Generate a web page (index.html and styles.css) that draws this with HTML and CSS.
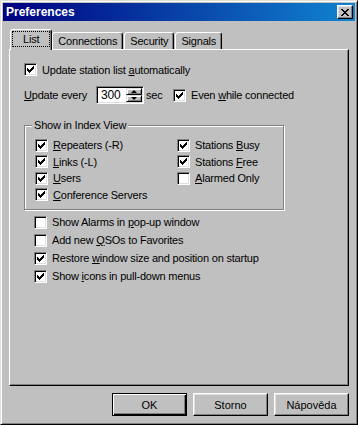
FILE: index.html
```html
<!DOCTYPE html>
<html>
<head>
    <link rel="stylesheet" href="styles.css">
</head>
<body>
  <svg width="0" height="0" class="defs">
    <symbol id="chk" viewBox="0 0 11 11">
      <path d="M8 2h1v1h-1z M7 3h2v1h-2z M2 4h1v1h-1z M6 4h3v1h-3z M2 5h2v1h-2z M5 5h3v1h-3z M2 6h5v1h-5z M3 7h3v1h-3z M4 8h1v1h-1z" fill="#000"/>
    </symbol>
  </svg>
  <div class="window">
    <div class="titlebar">
      <span class="title">Preferences</span>
      <span class="close">
        <svg width="8" height="7" viewBox="0 0 8 7"><path d="M0 0h2v1H0z M6 0h2v1H6z M1 1h2v1H1z M5 1h2v1H5z M2 2h4v1H2z M3 3h2v1H3z M2 4h4v1H2z M1 5h2v1H1z M5 5h2v1H5z M0 6h2v1H0z M6 6h2v1H6z" fill="#000"/></svg>
      </span>
    </div>
    <div class="body">
      <div class="tabs">
        <div class="tab active"><span class="focus">List</span></div>
        <div class="tab">Connections</div>
        <div class="tab">Security</div>
        <div class="tab">Signals</div>
      </div>
      <div class="panel">
        <div class="row">
          <label class="check"><span class="cb"><svg><use href="#chk"/></svg></span><span>Update station list <u>a</u>utomatically</span></label>
        </div>
        <div class="row row-every">
          <span class="lbl-every"><u>U</u>pdate every</span>
          <div class="spin">
            <span class="spin-val">300</span>
            <span class="spin-btns">
              <span class="spin-btn"><i class="arrow up"></i></span>
              <span class="spin-btn"><i class="arrow down"></i></span>
            </span>
          </div>
          <span class="sec">sec</span>
          <label class="check"><span class="cb"><svg><use href="#chk"/></svg></span><span>Even <u>w</u>hile connected</span></label>
        </div>
        <div class="group">
          <span class="legend">Show in Index View</span>
          <div class="gcol">
            <label class="check grow"><span class="cb"><svg><use href="#chk"/></svg></span><span><u>R</u>epeaters (-R)</span></label>
            <label class="check grow"><span class="cb"><svg><use href="#chk"/></svg></span><span><u>L</u>inks (-L)</span></label>
            <label class="check grow"><span class="cb"><svg><use href="#chk"/></svg></span><span><u>U</u>sers</span></label>
            <label class="check grow"><span class="cb"><svg><use href="#chk"/></svg></span><span><u>C</u>onference Servers</span></label>
          </div>
          <div class="gcol">
            <label class="check grow"><span class="cb"><svg><use href="#chk"/></svg></span><span>Stations <u>B</u>usy</span></label>
            <label class="check grow"><span class="cb"><svg><use href="#chk"/></svg></span><span>Stations <u>F</u>ree</span></label>
            <label class="check grow"><span class="cb"></span><span><u>A</u>larmed Only</span></label>
          </div>
        </div>
        <div class="opts">
          <label class="check orow"><span class="cb"></span><span>Show Alarms in <u>p</u>op-up window</span></label>
          <label class="check orow"><span class="cb"></span><span>Add new <u>Q</u>SOs to Favorites</span></label>
          <label class="check orow"><span class="cb"><svg><use href="#chk"/></svg></span><span>Restore <u>w</u>indow size and position on startup</span></label>
          <label class="check orow"><span class="cb"><svg><use href="#chk"/></svg></span><span>Show <u>i</u>cons in pull-down menus</span></label>
        </div>
      </div>
      <div class="buttons">
        <button class="btn default">OK</button>
        <button class="btn">Storno</button>
        <button class="btn">Nápověda</button>
      </div>
    </div>
  </div>
</body>
</html>
```

FILE: styles.css
```css
/* page and dialog frame */
body {
    margin: 0;
    font-family: "Liberation Sans", Arial, sans-serif;
    font-size: 11px;
    letter-spacing: -0.2px;
    color: #000;
    background: #c0c0c0;
}

.defs {
    position: absolute;
}

.window {
    width: 358px;
    height: 425px;
    box-sizing: border-box;
    border: 1px solid;
    border-color: #dfdfdf #000 #000 #dfdfdf;
    box-shadow: inset 1px 1px #fff, inset -1px -1px #808080;
    padding: 2px;
    background: #c0c0c0;
    display: flex;
    flex-direction: column;
}

/* title bar */
.titlebar {
    height: 18px;
    display: flex;
    align-items: center;
    justify-content: space-between;
    padding: 0 2px 0 3px;
    background: linear-gradient(to right, #000080, #1084d0);
}

.title {
    color: #fff;
    font-weight: bold;
    font-size: 12px;
    letter-spacing: 0;
}

.close {
    width: 16px;
    height: 14px;
    box-sizing: border-box;
    background: #c0c0c0;
    border: 1px solid;
    border-color: #fff #000 #000 #fff;
    box-shadow: inset -1px -1px #808080, inset 1px 1px #dfdfdf;
    display: flex;
    align-items: center;
    justify-content: center;
}

/* tabs */
.body {
    flex: 1;
    padding: 0 6px;
    display: flex;
    flex-direction: column;
}

.tabs {
    display: flex;
    align-items: flex-end;
    height: 21px;
    margin-top: 8px;
    padding-left: 1px;
    position: relative;
    z-index: 1;
}

.tab {
    height: 17px;
    box-sizing: border-box;
    padding: 0 5px;
    margin: 0 1px 1px 0;
    border: 1px solid;
    border-bottom: none;
    border-color: #fff #000 transparent #fff;
    box-shadow: inset -1px 0 #808080;
    border-radius: 3px 3px 0 0;
    background: #c0c0c0;
    display: flex;
    align-items: center;
}

.tab.active {
    height: 21px;
    margin: 0;
    padding: 1px 1px 0 1px;
    align-items: flex-start;
}

.focus {
    height: 16px;
    box-sizing: border-box;
    border: 1px dotted #000;
    padding: 0 10px;
    display: flex;
    align-items: center;
}

/* tab page */
.panel {
    height: 337px;
    box-sizing: border-box;
    margin-top: -1px;
    border: 1px solid;
    border-color: #fff #000 #000 #fff;
    box-shadow: inset -1px -1px #808080;
    padding: 11px 0 0 14px;
}

.row {
    display: flex;
    align-items: center;
    height: 17px;
}

.check {
    display: flex;
    align-items: center;
    gap: 5px;
}

.cb {
    width: 13px;
    height: 13px;
    flex: none;
    box-sizing: border-box;
    background: #fff;
    border: 1px solid;
    border-color: #808080 #fff #fff #808080;
    box-shadow: inset 1px 1px #000, inset -1px -1px #dfdfdf;
}

.cb svg {
    display: block;
    width: 11px;
    height: 11px;
    shape-rendering: crispEdges;
}

/* update interval row */
.row-every {
    height: 18px;
    margin-top: 8px;
}

.lbl-every {
    width: 72px;
}

.spin {
    width: 48px;
    height: 18px;
    box-sizing: border-box;
    display: flex;
    border: 1px solid;
    border-color: #808080 #fff #fff #808080;
    box-shadow: inset 1px 1px #000, inset -1px -1px #dfdfdf;
    background: #fff;
    padding: 1px;
}

.spin-val {
    flex: 1;
    padding-left: 3px;
    font-size: 12px;
    display: flex;
    align-items: center;
}

.spin-btns {
    width: 16px;
    display: flex;
    flex-direction: column;
}

.spin-btn {
    flex: 1;
    box-sizing: border-box;
    background: #c0c0c0;
    border: 1px solid;
    border-color: #dfdfdf #000 #000 #dfdfdf;
    box-shadow: inset 1px 1px #fff, inset -1px -1px #808080;
    display: flex;
    align-items: center;
    justify-content: center;
}

.arrow {
    width: 0;
    height: 0;
    border-left: 3px solid transparent;
    border-right: 3px solid transparent;
}

.arrow.up {
    border-bottom: 3px solid #000;
}

.arrow.down {
    border-top: 3px solid #000;
}

.sec {
    width: 27px;
    margin-left: 2px;
}

/* group box */
.group {
    position: relative;
    width: 260px;
    height: 85px;
    box-sizing: border-box;
    margin-top: 21px;
    border: 1px solid #808080;
    box-shadow: inset 1px 1px #fff, 1px 1px #fff;
    padding: 11px 0 0 10px;
    display: flex;
}

.legend {
    position: absolute;
    top: -7px;
    left: 7px;
    padding: 0 2px;
    background: #c0c0c0;
}

.gcol {
    flex: 1;
    display: flex;
    flex-direction: column;
}

.gcol:first-of-type {
    flex: none;
    width: 142px;
}

.grow {
    height: 16.5px;
}

/* other options */
.opts {
    margin-top: 3px;
    margin-left: 10px;
    display: flex;
    flex-direction: column;
}

.orow {
    height: 18px;
}

/* dialog buttons */
.buttons {
    display: flex;
    justify-content: flex-end;
    gap: 6px;
    margin-top: 7px;
}

.btn {
    width: 75px;
    height: 23px;
    box-sizing: border-box;
    padding: 0;
    font: inherit;
    color: #000;
    background: #c0c0c0;
    border: 1px solid;
    border-color: #fff #000 #000 #fff;
    box-shadow: inset -1px -1px #808080, inset 1px 1px #dfdfdf;
}

.btn.default {
    border-color: #000;
    box-shadow: inset 1px 1px #fff, inset -1px -1px #000, inset -2px -2px #808080;
}
```
